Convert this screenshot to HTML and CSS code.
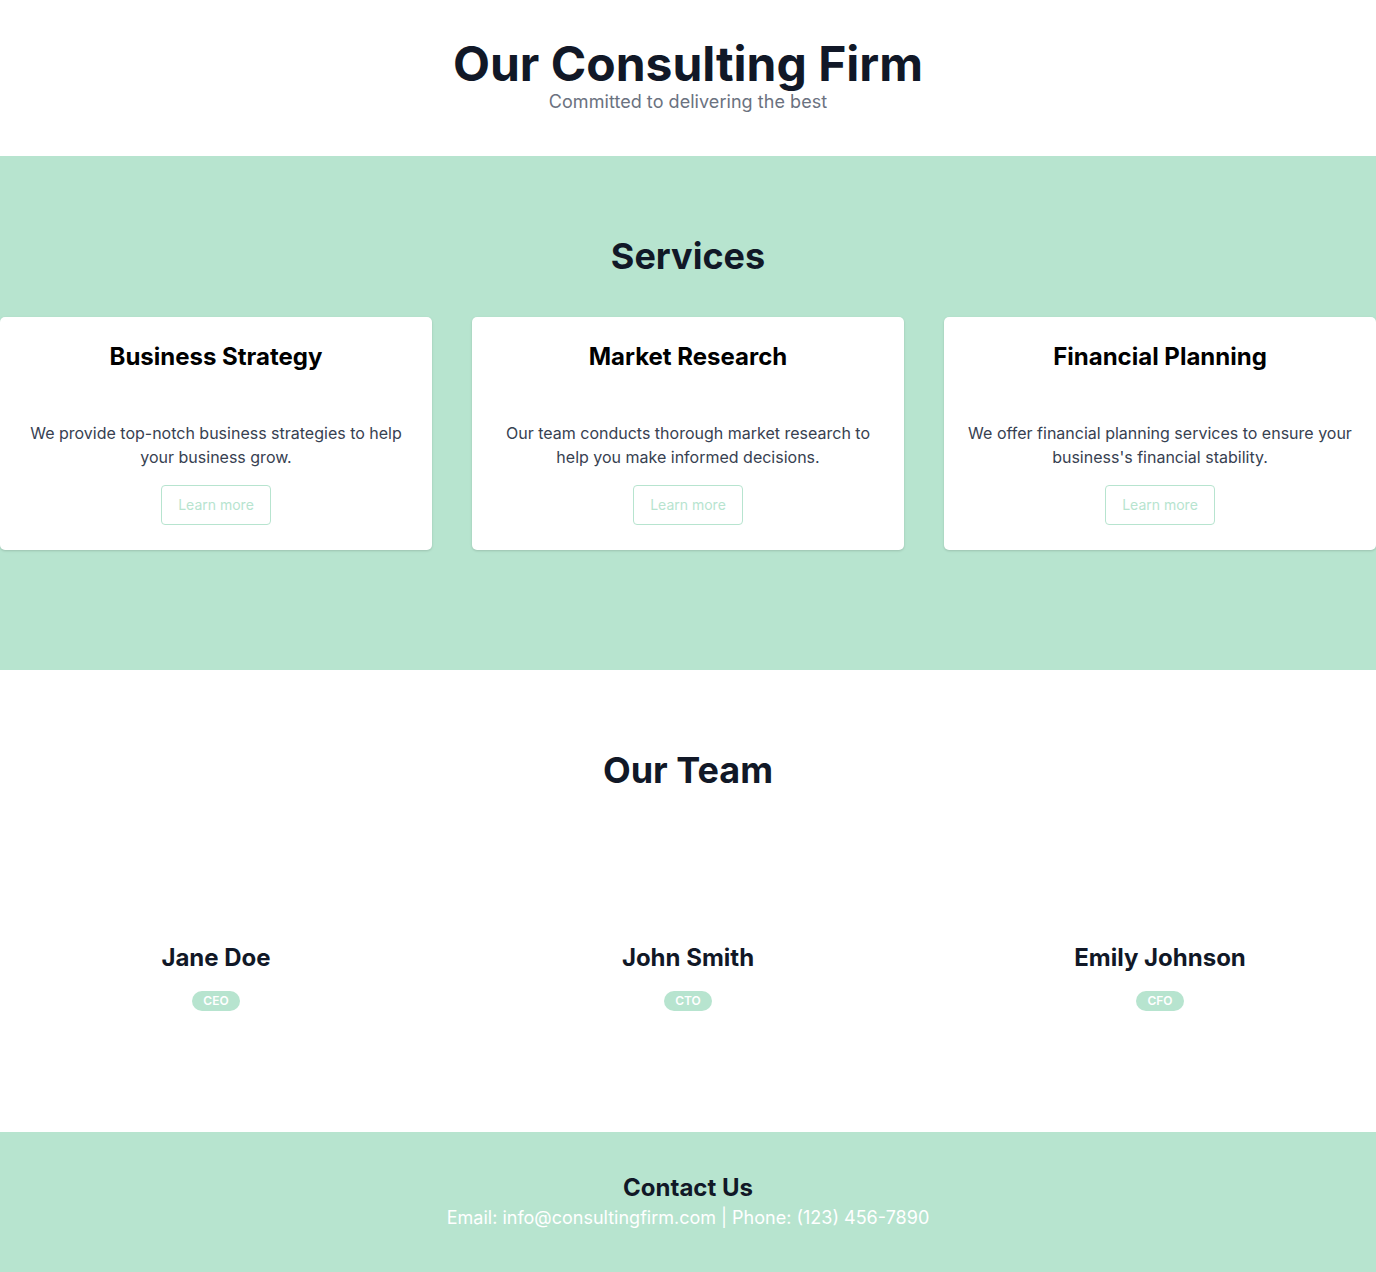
FILE: index.html
```html
<!DOCTYPE html>
<html lang="en">
<head>
<meta charset="utf-8">
<title>Our Consulting Firm</title>
<link rel="stylesheet" href="styles.css">
</head>
<body>
<header class="hero">
  <h1 class="hero-title">Our Consulting Firm</h1>
  <p class="hero-sub">Committed to delivering the best</p>
</header>

<section class="services">
  <h2 class="section-title">Services</h2>
  <div class="grid">
    <div class="card">
      <h3 class="card-title">Business Strategy</h3>
      <p class="card-text">We provide top-notch business strategies to help your business grow.</p>
      <button class="btn">Learn more</button>
    </div>
    <div class="card">
      <h3 class="card-title">Market Research</h3>
      <p class="card-text">Our team conducts thorough market research to help you make informed decisions.</p>
      <button class="btn">Learn more</button>
    </div>
    <div class="card">
      <h3 class="card-title">Financial Planning</h3>
      <p class="card-text">We offer financial planning services to ensure your business's financial stability.</p>
      <button class="btn">Learn more</button>
    </div>
  </div>
</section>

<section class="team">
  <h2 class="section-title">Our Team</h2>
  <div class="grid team-grid">
    <div class="member">
      <h3 class="member-name">Jane Doe</h3>
      <span class="badge">CEO</span>
    </div>
    <div class="member">
      <h3 class="member-name">John Smith</h3>
      <span class="badge">CTO</span>
    </div>
    <div class="member">
      <h3 class="member-name">Emily Johnson</h3>
      <span class="badge">CFO</span>
    </div>
  </div>
</section>

<footer class="footer">
  <h3 class="footer-title">Contact Us</h3>
  <p class="footer-text">Email: info@consultingfirm.com | Phone: (123) 456-7890</p>
</footer>
</body>
</html>
```

FILE: styles.css
```css
* { box-sizing: border-box; }
body {
  margin: 0;
  font-family: Inter, "Liberation Sans", sans-serif;
  color: #111827;
  background: #fff;
}
h1, h2, h3, p { margin: 0; }

.hero {
  padding: 40px 16px;
  text-align: center;
}
.hero-title {
  font-size: 48px;
  line-height: 48px;
  font-weight: 700;
  color: #111827;
}
.hero-sub {
  font-size: 18px;
  line-height: 28px;
  color: #6b7280;
  letter-spacing: 0.05px;
}

.services {
  background: #b7e4cf;
  padding: 80px 0 120px;
}
.section-title {
  font-size: 36px;
  line-height: 40px;
  font-weight: 700;
  text-align: center;
  color: #111827;
  margin-bottom: 41px;
}
.grid {
  display: grid;
  grid-template-columns: repeat(3, 1fr);
  column-gap: 40px;
}
.card {
  background: #fff;
  border-radius: 5px;
  box-shadow: 0 1px 3px rgba(0,0,0,0.1), 0 1px 2px rgba(0,0,0,0.06);
  padding: 24px 24px 25px;
  text-align: center;
  display: flex;
  flex-direction: column;
  align-items: center;
}
.card-title {
  font-size: 24px;
  line-height: 32px;
  font-weight: 700;
  color: #000;
  margin-bottom: 48px;
}
.card-text {
  font-size: 16px;
  line-height: 24px;
  color: #374151;
  margin-bottom: 16px;
}
.btn {
  font-family: inherit;
  font-size: 14px;
  line-height: 20px;
  color: #b7e4cf;
  background: #fff;
  border: 1px solid #b7e4cf;
  border-radius: 4px;
  padding: 9px 16px;
  width: 110px;
  height: 40px;
  cursor: pointer;
}

.team {
  padding: 80px 0 121px;
}
.team-grid {
  padding-top: 111px;
}
.member {
  display: flex;
  flex-direction: column;
  align-items: center;
}
.member-name {
  font-size: 24px;
  line-height: 32px;
  font-weight: 700;
  color: #111827;
  margin-bottom: 17px;
}
.badge {
  background: #b7e4cf;
  color: #fff;
  font-size: 12px;
  line-height: 20px;
  font-weight: 600;
  padding: 0 11px;
  border-radius: 10px;
}

.footer {
  background: #b7e4cf;
  padding: 40px 16px;
  text-align: center;
}
.footer-title {
  font-size: 24px;
  line-height: 32px;
  font-weight: 700;
  color: #111827;
}
.footer-text {
  font-size: 18px;
  line-height: 28px;
  color: #fff;
}
```
